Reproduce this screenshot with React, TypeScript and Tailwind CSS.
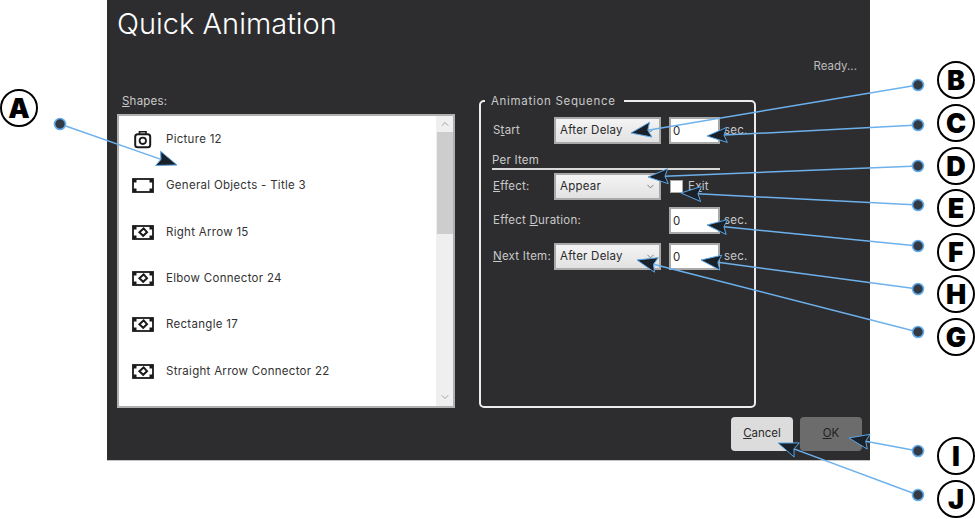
import React from 'react';
import { ChevronDown, ChevronUp } from 'lucide-react';

const shapes = [
  { name: 'Picture 12', icon: 'camera' },
  { name: 'General Objects - Title 3', icon: 'frame' },
  { name: 'Right Arrow 15', icon: 'shape' },
  { name: 'Elbow Connector 24', icon: 'shape' },
  { name: 'Rectangle 17', icon: 'shape' },
  { name: 'Straight Arrow Connector 22', icon: 'shape' },
];

// callout lines: dot on the right/left, tip on the control
const callouts = [
  { dot: [60, 124], tip: [177, 165] },
  { dot: [918, 85], tip: [631, 133] },
  { dot: [918, 125], tip: [707, 136] },
  { dot: [918, 166], tip: [648, 177] },
  { dot: [918, 205], tip: [681, 193] },
  { dot: [918, 246], tip: [707, 225] },
  { dot: [918, 289], tip: [701, 260] },
  { dot: [918, 332], tip: [637, 260] },
  { dot: [918, 451], tip: [849, 438] },
  { dot: [918, 495], tip: [778, 443] },
];

const badges = [
  { label: 'A', pos: 'left-0 top-[89px]' },
  { label: 'B', pos: 'left-[937px] top-[61px]' },
  { label: 'C', pos: 'left-[937px] top-[104px]' },
  { label: 'D', pos: 'left-[937px] top-[147px]' },
  { label: 'E', pos: 'left-[937px] top-[189px]' },
  { label: 'F', pos: 'left-[937px] top-[233px]' },
  { label: 'H', pos: 'left-[937px] top-[275px]' },
  { label: 'G', pos: 'left-[937px] top-[318px]' },
  { label: 'I', pos: 'left-[937px] top-[437px]' },
  { label: 'J', pos: 'left-[937px] top-[480px]' },
];

const ShapeIcon: React.FC<{ kind: string }> = ({ kind }) => {
  if (kind === 'camera') {
    return (
      <svg width="22" height="20" viewBox="0 0 22 20" fill="none" stroke="#1a1a1a">
        <rect x="3.2" y="4.2" width="15" height="13" rx="2.5" strokeWidth="2" />
        <path d="M7.5 4V1.8h6.5V4" strokeWidth="1.6" />
        <circle cx="10.8" cy="10.8" r="3.2" strokeWidth="1.8" />
      </svg>
    );
  }
  return (
    <svg width="22" height="15" viewBox="0 0 22 15" fill="none">
      <rect x="1" y="1" width="20" height="13" stroke="#1a1a1a" strokeWidth="1.8" />
      {[[1, 1], [17.5, 1], [1, 10.5], [17.5, 10.5]].map(([x, y]) => (
        <rect key={`${x}-${y}`} x={x} y={y} width="3.5" height="3.5" fill="#1a1a1a" />
      ))}
      {kind === 'shape' && (
        <path d="M11.6 3.4 15 7.2l-3.8 3.6L7.4 7.2Z" stroke="#1a1a1a" strokeWidth="2" />
      )}
    </svg>
  );
};

const Dropdown: React.FC<{ value: string }> = ({ value }) => (
  <div className="flex h-[27px] w-[107px] shrink-0 items-center justify-between border-2 border-[#a9a9a9] bg-gradient-to-b from-[#f4f4f4] to-[#e2e2e2] pl-[4px] pr-[3px] text-[11.5px] tracking-[0.02em] text-[#2a2a2a]">
    <span>{value}</span>
    <ChevronDown size={11} strokeWidth={1.6} className="text-[#555]" />
  </div>
);

const NumberBox: React.FC = () => (
  <input
    readOnly
    value="0"
    className="ml-[8px] h-[27px] w-[51px] shrink-0 border-2 border-[#a9a9a9] bg-white pl-[2px] text-[11.5px] text-[#2a2a2a] outline-none"
  />
);

const Sec: React.FC = () => <span className="ml-[4px] text-[11.5px] tracking-[0.02em] text-[#c9c9c9]">sec.</span>;

const Callouts: React.FC = () => (
  <svg className="pointer-events-none absolute left-0 top-0" width="975" height="519">
    {callouts.map(({ dot, tip }) => {
      const dx = dot[0] - tip[0];
      const dy = dot[1] - tip[1];
      const len = Math.hypot(dx, dy);
      const ux = dx / len;
      const uy = dy / len;
      const back = [tip[0] + ux * 20, tip[1] + uy * 20];
      const neck = [tip[0] + ux * 17, tip[1] + uy * 17];
      const head = [
        tip,
        [back[0] - uy * 7.5, back[1] + ux * 7.5],
        neck,
        [back[0] + uy * 7.5, back[1] - ux * 7.5],
      ]
        .map((p) => p.join(','))
        .join(' ');
      return (
        <g key={`${dot[0]}-${dot[1]}`}>
          <line x1={dot[0]} y1={dot[1]} x2={neck[0]} y2={neck[1]} stroke="#6db1ec" strokeWidth="1.5" />
          <polygon points={head} fill="#1b2128" stroke="#5aa5e6" strokeWidth="1" />
          <circle cx={dot[0]} cy={dot[1]} r="5.5" fill="#333a44" stroke="#64aeee" strokeWidth="1.6" />
        </g>
      );
    })}
  </svg>
);

export default function App() {
  return (
    <div className="relative h-[519px] w-[975px] overflow-hidden bg-white font-['Inter','Liberation_Sans',sans-serif]">
      <div className="ml-[107px] flex h-[461px] w-[763px] flex-col border-b border-[#c4c4c4] bg-[#2d2d2f]">
        <h1 className="h-[48px] pl-[10px] text-[29px] font-light leading-[48px] text-white">Quick Animation</h1>
        <div className="h-[45px] pr-[13px] pt-[10px] text-right text-[11.5px] leading-[16px] text-[#bcbcbc]">Ready...</div>

        <div className="flex pl-[10px]">
          <div className="w-[338px]">
            <div className="h-[21px] pl-[5px] text-[11.5px] leading-[16px] tracking-[0.02em] text-[#c9c9c9]">
              <u>S</u>hapes:
            </div>
            <div className="flex h-[294px] border-2 border-[#b0b0b0] bg-white">
              <ul className="flex-1">
                {shapes.map((s) => (
                  <li key={s.name} className="flex h-[46.3px] items-center pt-[1px] text-[11.5px] tracking-[0.025em] text-[#333]">
                    <span className="flex w-[47px] justify-center">
                      <ShapeIcon kind={s.icon} />
                    </span>
                    {s.name}
                  </li>
                ))}
              </ul>
              <div className="flex w-[17px] flex-col items-center bg-[#efefef] text-[#8a8a8a]">
                <div className="flex h-[16px] w-full items-center justify-center">
                  <ChevronUp size={12} strokeWidth={1.5} />
                </div>
                <div className="h-[102px] w-[16px] bg-[#cdcdcd]" />
                <div className="mt-auto flex h-[18px] w-full items-center justify-center">
                  <ChevronDown size={12} strokeWidth={1.5} />
                </div>
              </div>
            </div>
          </div>

          <fieldset className="ml-[24px] h-[315px] w-[277px] rounded-[5px] border-2 border-[#ececec]">
            <legend className="ml-[4px] h-[16px] pl-[6px] pr-[8px] text-[11.5px] leading-[16px] tracking-[0.06em] text-[#c9c9c9]">
              Animation Sequence
            </legend>
            <div className="pl-[12px] pt-[8px] text-[11.5px] tracking-[0.02em] text-[#c9c9c9]">
              <div className="flex items-center">
                <span className="w-[61px] shrink-0">S<u>t</u>art</span>
                <Dropdown value="After Delay" />
                <NumberBox />
                <Sec />
              </div>
              <div className="mt-[8px] h-[16px] w-[228px] -ml-[1px] box-content border-b-2 border-[#d8d8d8] leading-[16px]">Per Item</div>
              <div className="mt-[3px] flex items-center">
                <span className="w-[61px] shrink-0"><u>E</u>ffect:</span>
                <Dropdown value="Appear" />
                <span className="ml-[9px] h-[13px] w-[13px] shrink-0 border border-[#a9a9a9] bg-white" />
                <span className="ml-[5px]">E<u>x</u>it</span>
              </div>
              <div className="mt-[7px] flex items-center">
                <span className="w-[168px] shrink-0">Effect <u>D</u>uration:</span>
                <NumberBox />
                <Sec />
              </div>
              <div className="mt-[9px] flex items-center">
                <span className="w-[61px] shrink-0"><u>N</u>ext Item:</span>
                <Dropdown value="After Delay" />
                <NumberBox />
                <Sec />
              </div>
            </div>
          </fieldset>
        </div>

        <div className="mt-[9px] flex justify-end gap-[7px] pr-[8px]">
          <button className="h-[34px] w-[62px] rounded-[4px] bg-[#dcdcdc] text-[11.5px] text-[#2a2a2a]">
            <u>C</u>ancel
          </button>
          <button className="h-[34px] w-[62px] rounded-[4px] bg-[#6c6c6c] text-[11.5px] text-[#222]">
            <u>O</u>K
          </button>
        </div>
      </div>

      <Callouts />

      {badges.map((b) => (
        <div
          key={b.label}
          className={`absolute flex h-[38px] w-[38px] items-center justify-center rounded-full border-2 border-black bg-white text-[27px] font-black leading-none text-black ${b.pos}`}
        >
          {b.label}
        </div>
      ))}
    </div>
  );
}
